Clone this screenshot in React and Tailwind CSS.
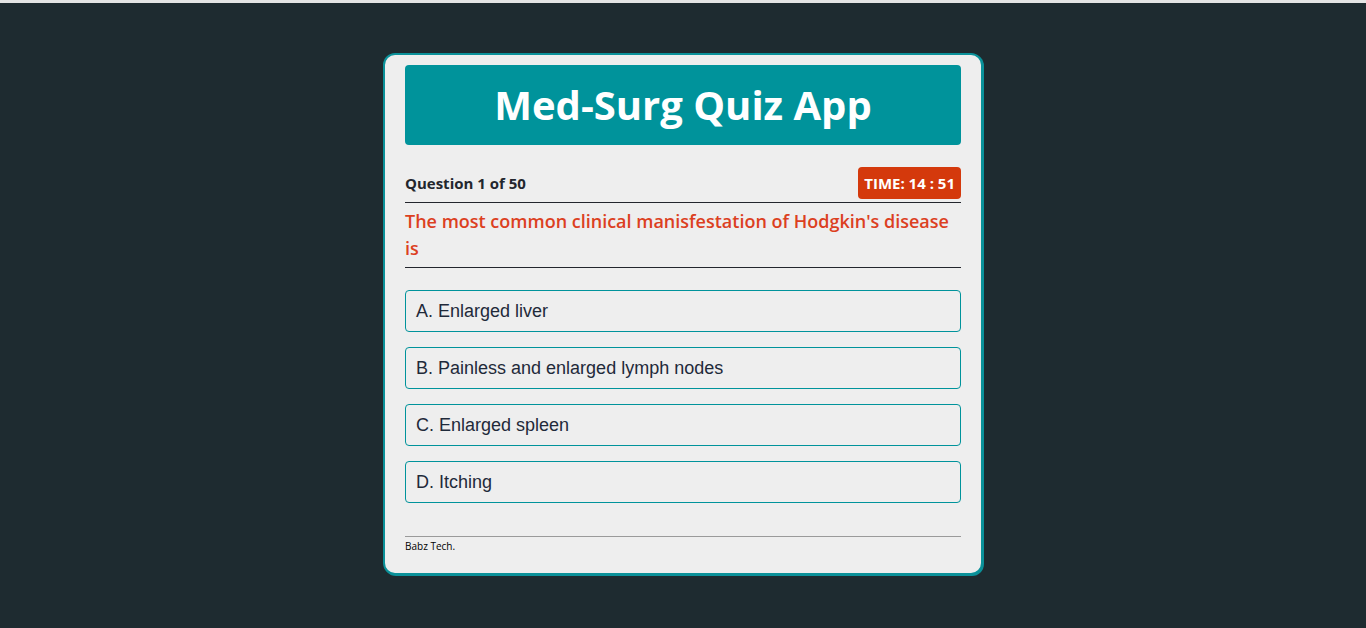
import React from 'react';

const options = [
  "A. Enlarged liver",
  "B. Painless and enlarged lymph nodes",
  "C. Enlarged spleen",
  "D. Itching",
];

const App = () => {
  return (
    <div className="min-h-[628px] bg-[#1e2b30] border-t-[3px] border-[#e4e4e4] flex justify-center" style={{ fontFamily: '"Open Sans", sans-serif' }}>
      <div className="mt-[50px] mb-[53px] w-[600px] h-[522px] bg-[#eeeeee] border-2 border-[#0b9199] rounded-[12px] shadow-[1px_1px_0_#0b9199] px-5 pt-[10px] flex flex-col">
        <div className="h-[80px] bg-[#00939b] rounded-[4px] flex items-center justify-center">
          <h1 className="text-white font-bold text-[40px] leading-none">Med-Surg Quiz App</h1>
        </div>

        <div className="mt-[22px] flex items-end justify-between pb-[3px] border-b border-[#23262d]">
          <span className="text-[15px] font-bold text-[#23262d] leading-none mb-[8px]">Question 1 of 50</span>
          <span className="h-[32px] px-[6px] bg-[#d4390c] rounded-[4px] text-white text-[15px] font-bold flex items-center">TIME: 14 : 51</span>
        </div>

        <p className="pt-[5px] pb-[5px] text-[18px] font-semibold leading-[27px] text-[#dc401f] border-b border-[#23262d]">
          The most common clinical manisfestation of Hodgkin's disease is
        </p>

        <div className="mt-[22px] flex flex-col gap-[15px]">
          {options.map((opt) => (
            <button key={opt} className="h-[42px] text-left px-[10px] border border-[#00939b] rounded-[4px] text-[18px] text-[#1f2a3a]" style={{ fontFamily: '"Liberation Sans", Arial, sans-serif' }}>
              {opt}
            </button>
          ))}
        </div>

        <div className="mt-[33px] border-t border-[#9a9a9a] pt-[3px] text-[10px] text-black leading-[12px]">Babz Tech.</div>
      </div>
    </div>
  );
};

export default App;
